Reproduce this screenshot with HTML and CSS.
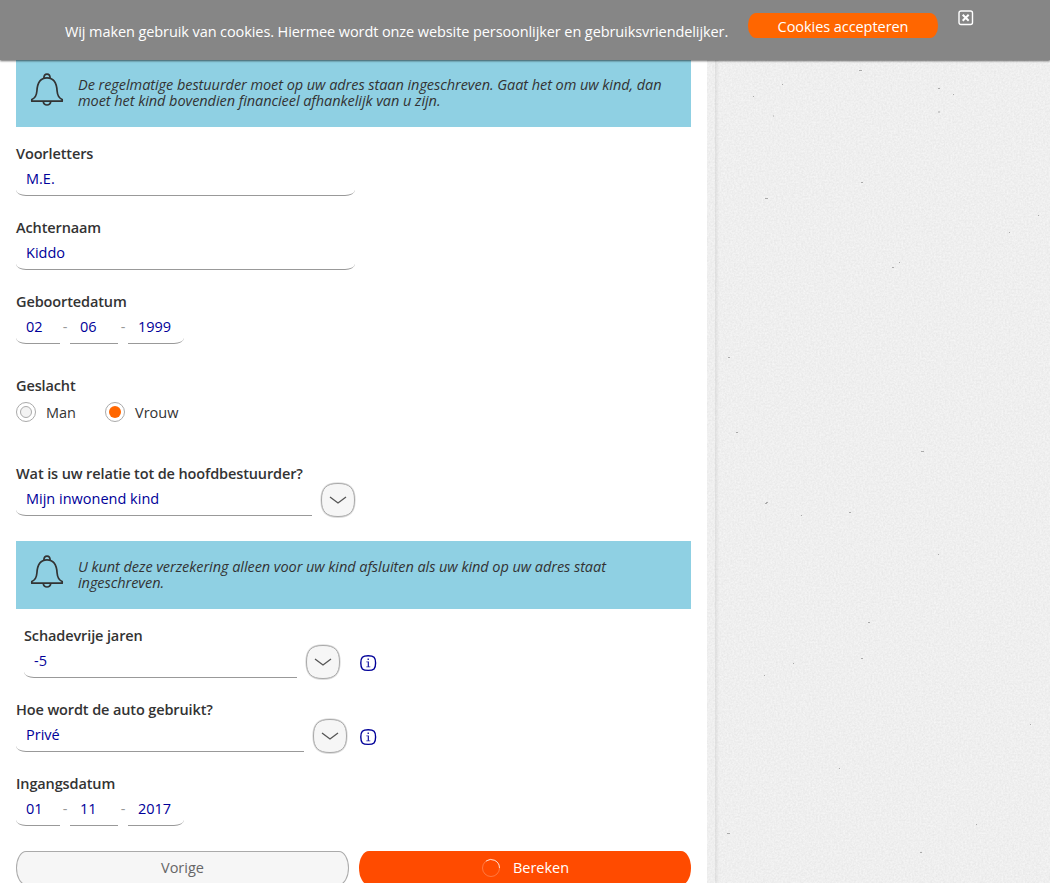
FILE: index.html
```
<!DOCTYPE html>
<html lang="nl">
<head>
<meta charset="utf-8">
<title>Regelmatige bestuurder</title>
<link rel="stylesheet" href="styles.css">
</head>
<body>
<svg class="defs" width="0" height="0" aria-hidden="true">
  <symbol id="bell" viewBox="0 0 34 34"><g fill="none" stroke="#333" stroke-width="1.7" stroke-linejoin="round"><path d="M1.800 28.200v-1.700c3.200-1.300 4.800-4.500 5.100-8.500.4-7.700 3.600-13.200 10.100-13.200S26.700 10.300 27.100 18c.3 4 1.900 7.200 5.100 8.500v1.700z"/><path d="M13.900 5.100c0-2.600 1.200-3.900 3.100-3.900s3.100 1.300 3.100 3.900M13.200 28.400c.4 2.400 1.800 3.600 3.800 3.600s3.400-1.200 3.800-3.600"/></g></symbol>
  <symbol id="drop" viewBox="0 0 36 36"><path d="M18 1.500C29.500 1.500 34.500 6 34.500 18S29.500 34.800 18 34.800 1.500 30 1.500 18 6.500 1.500 18 1.500z" fill="#f6f6f6" stroke="#ddd" stroke-width="2.400"/><path d="M18 1.500C29.500 1.500 34.500 6 34.500 18S29.500 34.500 18 34.500 1.500 30 1.500 18 6.500 1.500 18 1.500z" fill="#f6f6f6" stroke="#aaa"/><path d="M10 15l8 6 8-6" fill="none" stroke="#555" stroke-width="1.300"/></symbol>
  <symbol id="info" viewBox="0 0 18 18"><path d="M9.200 1.700c5.700 0 7.400 1.700 7.400 7.400s-1.700 7.300-7.400 7.300-7.400-1.600-7.400-7.300 1.700-7.400 7.400-7.400z" fill="none" stroke="#000099" stroke-width="1.400"/><path d="M8.500 4.500h1.500v1.400H8.500zM7.300 7.400H10v5h1.300v.8H7.300v-.8h1.400V8.200H7.300z" fill="#000099" opacity=".85"/></symbol>
</svg>
<header class="cookiebar">
  <p class="cookie-text">Wij maken gebruik van cookies. Hiermee wordt onze website persoonlijker en gebruiksvriendelijker.</p>
  <div class="accept"><span>Cookies accepteren</span></div>
  <svg class="close" width="16" height="16" viewBox="0 0 16 16" fill="none" stroke="#fff"><rect x="1" y="1" width="13.500" height="13.500" rx="2" stroke-width="1.400"/><path d="M4.700 4.700l6 6m0-6l-6 6" stroke-width="2"/></svg>
</header>
<div class="page">
  <main class="form">
    <div class="notice"><svg class="bell"><use href="#bell"/></svg><p>De regelmatige bestuurder moet op uw adres staan ingeschreven. Gaat het om uw kind, dan<br>moet het kind bovendien financieel afhankelijk van u zijn.</p></div>
    <div class="field"><label>Voorletters</label><div class="input name">M.E.</div></div>
    <div class="field"><label>Achternaam</label><div class="input name">Kiddo</div></div>
    <div class="field dates"><label>Geboortedatum</label><div class="row"><div class="input day">02</div><i>-</i><div class="input month">06</div><i>-</i><div class="input year">1999</div></div></div>
    <div class="field gender"><label>Geslacht</label><div class="row radios"><b class="radio"></b><span class="man">Man</span><b class="radio on"></b><span>Vrouw</span></div></div>
    <div class="field"><label>Wat is uw relatie tot de hoofdbestuurder?</label><div class="row"><div class="input select relation">Mijn inwonend kind</div><svg class="drop"><use href="#drop"/></svg></div></div>
    <div class="notice second"><svg class="bell"><use href="#bell"/></svg><p>U kunt deze verzekering alleen voor uw kind afsluiten als uw kind op uw adres staat<br>ingeschreven.</p></div>
    <div class="field indent"><label>Schadevrije jaren</label><div class="row"><div class="input select years">-5</div><svg class="drop"><use href="#drop"/></svg><svg class="info near"><use href="#info"/></svg></div></div>
    <div class="field"><label>Hoe wordt de auto gebruikt?</label><div class="row"><div class="input select usage">Privé</div><svg class="drop"><use href="#drop"/></svg><svg class="info"><use href="#info"/></svg></div></div>
    <div class="field start"><label>Ingangsdatum</label><div class="row"><div class="input day">01</div><i>-</i><div class="input month">11</div><i>-</i><div class="input year">2017</div></div></div>
    <div class="actions"><div class="btn back">Vorige</div><div class="btn next"><svg width="20" height="20" viewBox="0 0 20 20" fill="none" stroke="#fff"><circle cx="10" cy="10" r="8.500" opacity=".25"/><path d="M5 3.100A8.500 8.500 0 0 1 18.500 10" opacity=".7"/></svg><span>Bereken</span></div></div>
  </main>
  <aside class="paper">
    <svg width="343" height="883" viewBox="707 0 343 883">
      <filter id="grain" x="0" y="0" width="100%" height="100%" color-interpolation-filters="sRGB"><feTurbulence type="fractalNoise" baseFrequency=".55" numOctaves="2" seed="4"/><feColorMatrix values=".08 0 0 0 .896  .08 0 0 0 .896  .08 0 0 0 .896  0 0 0 0 1"/></filter>
      <rect x="707" width="343" height="883" filter="url(#grain)"/>
      <linearGradient id="edge"><stop stop-color="#999" stop-opacity=".2"/><stop offset="1" stop-color="#999" stop-opacity="0"/></linearGradient>
      <rect x="715" width="4" height="883" fill="url(#edge)"/>
      <path stroke="#aaa" d="M859 70.500h3M938 88.500h2M938 112h2M861 182.500h2M765 198.500h3M728 357.500h2M736 432.500h2M765 503.500h2M766 502.500h2M921 451.500h3M782 84.500h1M753 96.500h1M773 116h1M953 94.500h1M899 262.500h1M892 267.500h2M1038 215.500h1M868 622.500h2M861 658.500h2M764 675.500h1M793 663.500h1M938 554.500h1M727 833.500h3M920 852.500h2M976 824.500h1M849 512.500h2M801 515.500h1M1009 232.500h1M839 768.500h1M1030 724.500h1"/>
    </svg>
  </aside>
</div>
</body>
</html>
```
FILE: styles.css
```
* { box-sizing: border-box; }
body { margin: 0; height: 883px; overflow: hidden; position: relative; background: #eee; color: #333; font: 14.5px/20px "Open Sans", "Noto Sans", sans-serif; }
p { margin: 0; }
.defs { position: absolute; }
.cookiebar { position: absolute; top: 0; left: 0; z-index: 2; width: 100%; height: 60px; background: #868686; box-shadow: 0 1px 2px rgba(0,0,0,.6); display: flex; align-items: flex-start; padding-left: 65px; color: #fff; white-space: nowrap; }
.cookie-text { width: 683px; padding-top: 22px; letter-spacing: -.09px; }
.accept { width: 190px; height: 25px; margin-top: 13px; border-radius: 8px / 12px; background: #f60; text-align: center; line-height: 27px; letter-spacing: -.06px; }
.close { margin: 10px 0 0 20px; }
.page { display: flex; height: 883px; }
.form { width: 707px; padding: 59px 16px 0; background: #fff; }
.notice { height: 68px; margin-bottom: 17px; background: #8fd0e3; display: flex; padding: 14px 0 0 14px; font-style: italic; line-height: 16px; white-space: nowrap; letter-spacing: -.06px; }
.notice.second { margin-top: 3px; }
.bell { width: 34px; height: 34px; margin-right: 14px; flex: none; }
.notice p { padding-top: 4px; }
.field { height: 74px; }
.field label { display: block; height: 20px; font-weight: 600; white-space: nowrap; letter-spacing: -.12px; }
.row { display: flex; }
.input { height: 32px; padding: 0 10px; line-height: 30px; color: #009; border-bottom: 1px solid #999; white-space: nowrap; }
.name { width: 339px; border-radius: 0 0 10px 10px / 0 0 6px 6px; }
.day { width: 44px; border-radius: 0 0 0 10px / 0 0 0 6px; }
.month { width: 48px; }
.year { width: 56px; border-radius: 0 0 10px 0 / 0 0 6px 0; }
.row i { width: 10px; text-align: center; font-style: normal; color: #999; line-height: 30px; }
.dates { height: 84px; }
.gender { height: 88px; }
.radios { padding-top: 6px; align-items: center; }
.radios span { line-height: 18px; padding-top: 2px; }
.radio { width: 20px; height: 20px; border: 1px solid #aaa; border-radius: 50%; margin-right: 10px; display: grid; place-items: center; }
.radio::before { content: ""; width: 10px; height: 10px; border: 1px solid #aaa; border-radius: 50%; background: #f3f3f3; }
.radio.on::before { width: 12px; height: 12px; border: 0; background: #f60; }
.man { width: 59px; }
.select { border-radius: 0 0 0 10px / 0 0 0 6px; }
.relation { width: 296px; }
.years { width: 273px; }
.usage { width: 288px; }
.drop { width: 36px; height: 36px; margin: -2px 0 -4px 8px; flex: none; }
.indent { padding-left: 8px; }
.info { width: 18px; height: 18px; margin: 8px 0 0 11px; }
.near { margin-left: 18px; }
.start { height: 77px; }
.actions { display: flex; gap: 10px; }
.btn { height: 34px; line-height: 32px; border-radius: 10px / 17px; text-align: center; }
.back { width: 333px; background: #f6f6f6; border: 1px solid #aaa; color: #666; }
.next { width: 332px; background: #ff4b00; color: #fff; display: flex; justify-content: center; align-items: center; gap: 12px; }
.paper { width: 343px; height: 883px; overflow: hidden; }
```
